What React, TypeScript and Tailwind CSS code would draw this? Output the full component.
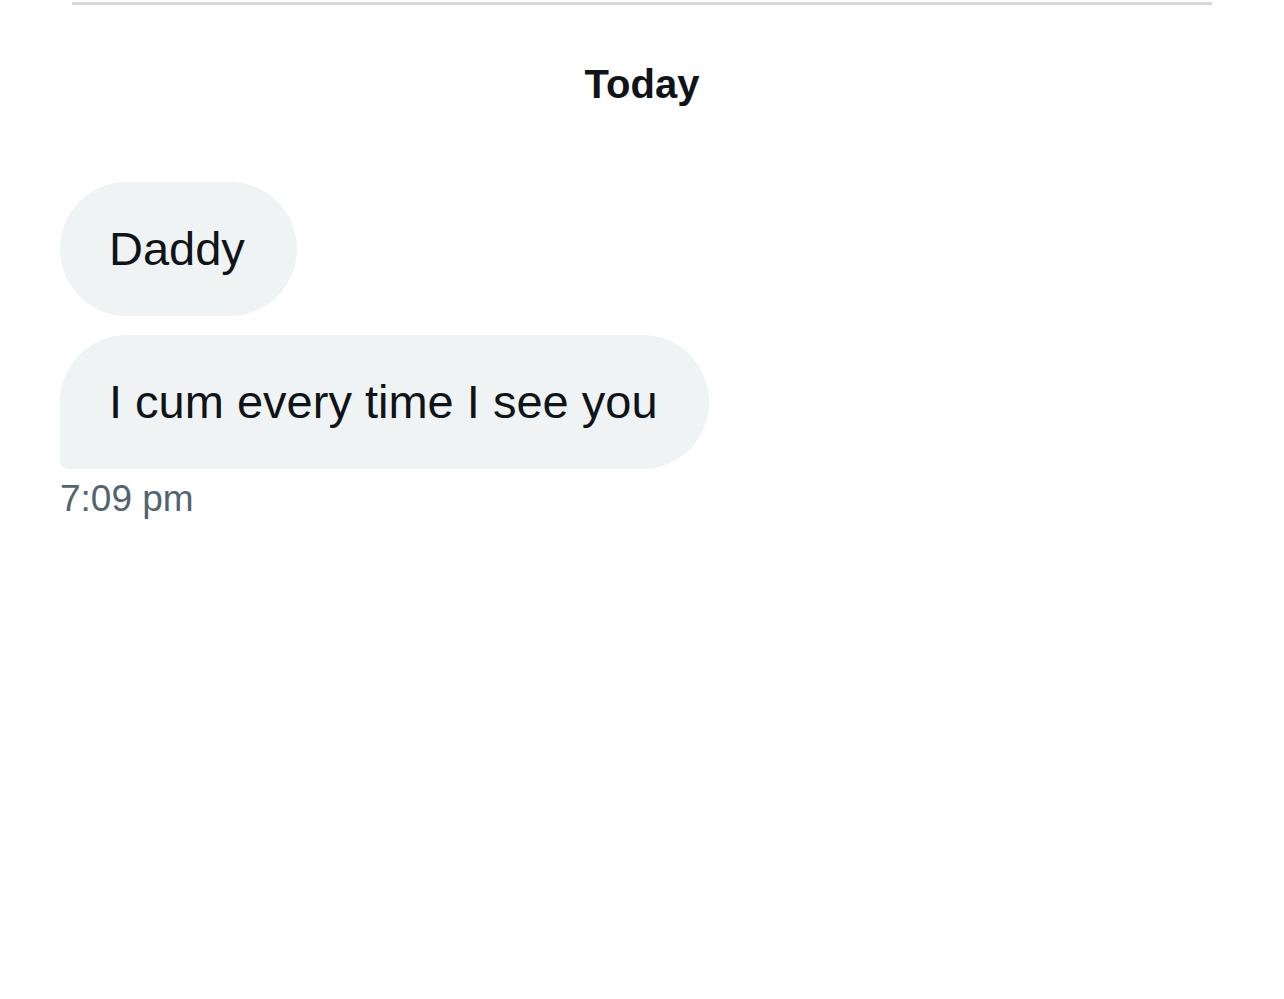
export default function App() {
  const font = { fontFamily: '"Liberation Sans", Arial, sans-serif' };
  return (
    <div className="w-[1284px] h-[999px] bg-white px-[60px] pt-[2px] text-[#0f1419]" style={font}>
      <div className="mx-[12px] h-[3px] bg-[#d6d6d8]" />
      <div className="mt-[55px] text-center text-[40px] leading-[48px] font-bold">Today</div>
      <div className="mt-[74px] flex flex-col items-start">
        <div className="h-[134px] flex items-center bg-[#eff3f4] rounded-[67px] pl-[49px] pr-[52px] text-[47px]">
          Daddy
        </div>
        <div className="mt-[19px] h-[134px] flex items-center bg-[#eff3f4] rounded-[67px] rounded-bl-[8px] pl-[49px] pr-[51px] text-[47px] whitespace-nowrap">
          I cum every time I see you
        </div>
        <div className="mt-[8px] text-[37px] leading-[44px] text-[#536471]">7:09 pm</div>
      </div>
    </div>
  );
}
